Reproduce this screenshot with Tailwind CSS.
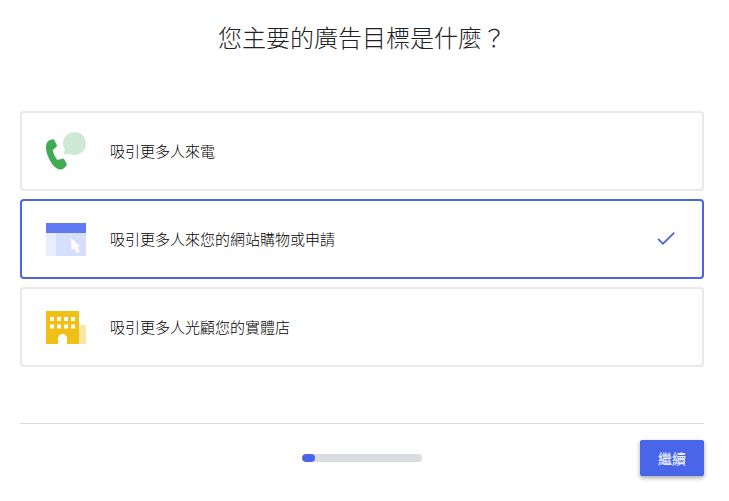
<!DOCTYPE html>
<html lang="zh-Hant">
<head>
    <meta charset="UTF-8">
    <meta name="viewport" content="width=device-width, initial-scale=1.0">
    <title>廣告目標</title>
    <script src="https://cdn.jsdelivr.net/npm/@tailwindcss/browser@4"></script>
</head>
<body class="bg-white font-['Noto_Sans_CJK_TC',sans-serif]">
    <form class="pt-5 pb-6 pl-5 pr-[25px]">
        <h1 class="mb-[57px] text-center text-2xl leading-[34px] font-light text-[#202124]">您主要的廣告目標是什麼？</h1>

        <!-- Goals -->
        <div class="flex flex-col gap-2" role="radiogroup" aria-label="廣告目標">
            <label class="group relative flex h-20 items-center gap-6 rounded border-2 border-[#e8e8ed] px-6 cursor-pointer has-checked:border-[#4a66e2]">
                <input type="radio" name="goal" value="calls" class="sr-only">
                <svg class="h-10 w-10 shrink-0" viewBox="0 0 40 40" aria-hidden="true">
                    <path fill="#ceead6" d="M28.500 1a11.500 11.500 0 1 1-4.600 22.040C22 23 20 23.200 18 23.300V21.500C18.200 20.500 18.500 19.300 18.700 18.400A11.500 11.500 0 0 1 28.500 1z"/>
                    <path fill="#41ab54" d="M4 8.900 6.300 8.200Q7.700 7.900 8.500 9.200L10.800 14Q11.200 15.400 10 16.300L6.700 19.200Q7.800 24.800 11.300 29L16.200 27.700Q17.600 27.300 18.400 28.500L20.600 32.800Q21.100 34 20 35.200Q16.900 39.200 12.600 38.200Q7.500 36.800 3.400 28.600Q-.4 21.300 0 15.500Q.3 10.300 4 8.900z"/>
                </svg>
                <span class="text-[15px] leading-6 font-light text-black">吸引更多人來電</span>
                <svg class="ml-auto hidden h-6 w-6 shrink-0 fill-[#4a66e2] group-has-checked:block" viewBox="0 0 24 24" aria-hidden="true"><path d="M9 15.500 4.700 11.200l-1.300 1.300L9 18.100 20.900 6.200l-1.300-1.300z"/></svg>
            </label>

            <label class="group relative flex h-20 items-center gap-6 rounded border-2 border-[#e8e8ed] px-6 cursor-pointer has-checked:border-[#4a66e2]">
                <input type="radio" name="goal" value="website" class="sr-only" checked>
                <svg class="h-10 w-10 shrink-0" viewBox="0 0 40 40" aria-hidden="true">
                    <path fill="#e8eefd" d="M0 14h10v23H0z"/>
                    <path fill="#d6e0fc" d="M10 14h30v23H10z"/>
                    <path fill="#617af3" d="M0 4h40v10H0z"/>
                    <path fill="#fff" d="M24.700 18.800 25.800 31l2.800-1.700 2.400 4.700 2.700-1.300-2.400-4.600 3-.8z"/>
                </svg>
                <span class="text-[15px] leading-6 font-light text-black">吸引更多人來您的網站購物或申請</span>
                <svg class="ml-auto hidden h-6 w-6 shrink-0 fill-[#4a66e2] group-has-checked:block" viewBox="0 0 24 24" aria-hidden="true"><path d="M9 15.500 4.700 11.200l-1.300 1.300L9 18.100 20.900 6.200l-1.300-1.300z"/></svg>
            </label>

            <label class="group relative flex h-20 items-center gap-6 rounded border-2 border-[#e8e8ed] px-6 cursor-pointer has-checked:border-[#4a66e2]">
                <input type="radio" name="goal" value="store" class="sr-only">
                <svg class="h-10 w-10 shrink-0" viewBox="0 0 40 40" aria-hidden="true">
                    <path fill="#fae7a6" d="M33 18h7v19h-7z"/>
                    <path fill="#f1c016" d="M0 4h33v33H21v-5.500a4.500 4.500 0 0 0-9 0V37H0z"/>
                    <path fill="#fff" d="M4 10h4v4H4zM11 10h4v4h-4zM18 10h4v4h-4zM25 10h4v4h-4zM4 17.500h4v4H4zM11 17.500h4v4h-4zM18 17.500h4v4h-4zM25 17.500h4v4h-4z"/>
                </svg>
                <span class="text-[15px] leading-6 font-light text-black">吸引更多人光顧您的實體店</span>
                <svg class="ml-auto hidden h-6 w-6 shrink-0 fill-[#4a66e2] group-has-checked:block" viewBox="0 0 24 24" aria-hidden="true"><path d="M9 15.500 4.700 11.200l-1.300 1.300L9 18.100 20.900 6.200l-1.300-1.300z"/></svg>
            </label>
        </div>

        <!-- Footer -->
        <footer class="mt-14 grid grid-cols-[1fr_120px_1fr] items-center border-t border-[#dadce0] pt-4">
            <div class="col-start-2 h-2 overflow-hidden rounded-full bg-[#dadce0]" role="progressbar" aria-label="進度" aria-valuemin="0" aria-valuemax="100" aria-valuenow="11">
                <div class="h-full rounded-full bg-[#4a66e8]" style="width: 11%"></div>
            </div>
            <button type="submit" class="h-9 w-16 justify-self-end rounded-xs bg-[#4a66e8] text-sm text-white shadow-[0_2px_4px_rgba(0,0,0,0.35)] cursor-pointer hover:bg-[#3f59d4]">繼續</button>
        </footer>
    </form>
</body>
</html>
